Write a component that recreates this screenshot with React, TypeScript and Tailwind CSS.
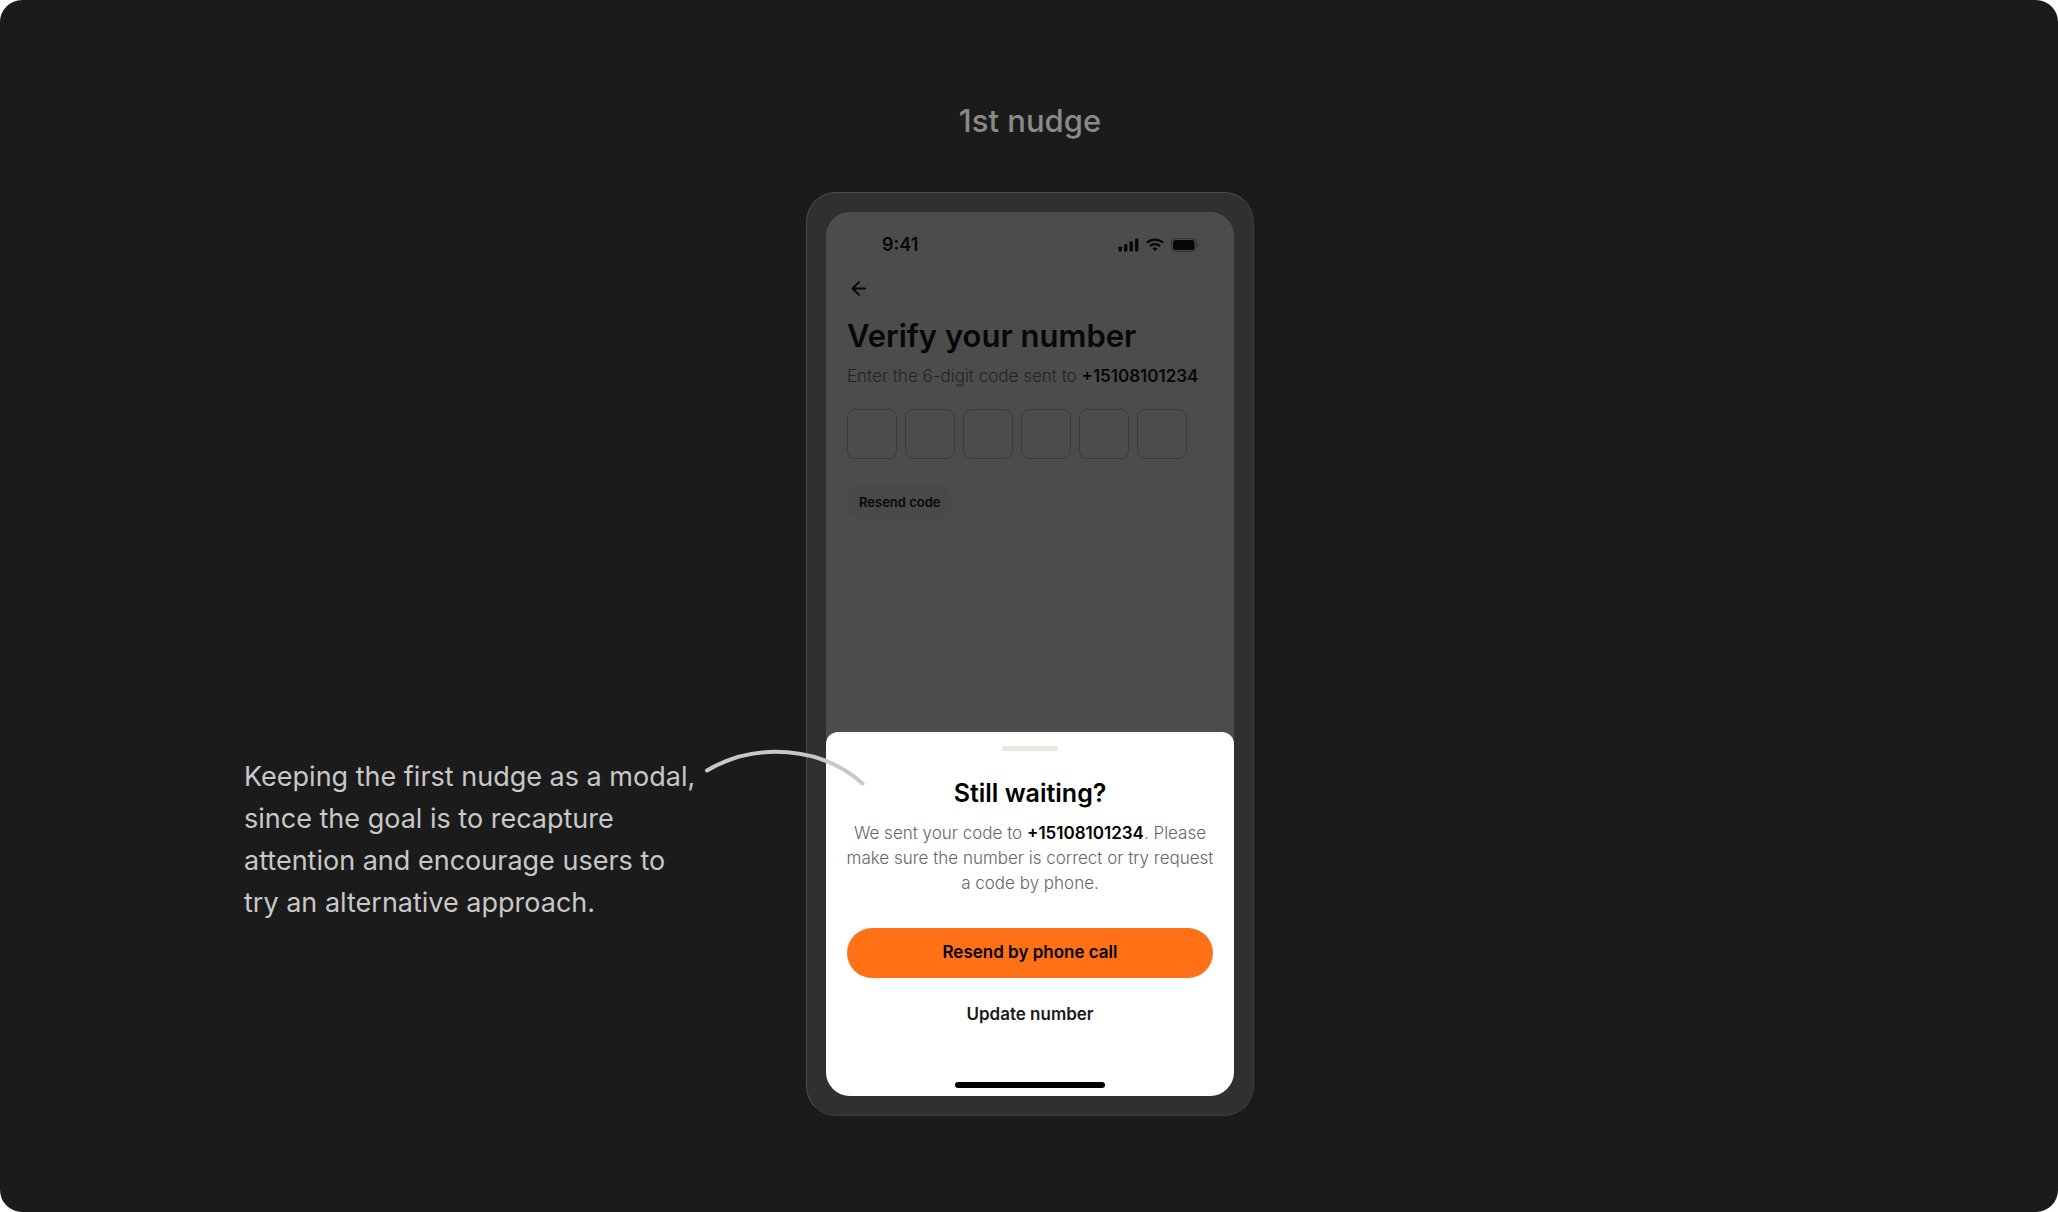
import React from 'react';

const PHONE_NUMBER = '+15108101234';
const CODE_LENGTH = 6;

const SignalIcon: React.FC = () => (
  <svg width="21" height="14" viewBox="0 0 21 14" fill="currentColor" aria-hidden="true">
    <rect x="0.5" y="8.5" width="3.4" height="5" rx="1" />
    <rect x="6" y="6" width="3.4" height="7.5" rx="1" />
    <rect x="11.5" y="3.2" width="3.4" height="10.3" rx="1" />
    <rect x="17" y="0.5" width="3.4" height="13" rx="1" />
  </svg>
);

const WifiIcon: React.FC = () => (
  <svg width="18" height="14" viewBox="0 0 18 14" fill="none" stroke="currentColor" aria-hidden="true">
    <path d="M1 4.7C5.4 0.6 12.6 0.6 17 4.7" strokeWidth="2.3" />
    <path d="M4 8.1C6.8 5.5 11.2 5.5 14 8.1" strokeWidth="2.2" />
    <path d="M9 13.2L6.2 10.4C7.8 9.1 10.2 9.1 11.8 10.4Z" fill="currentColor" stroke="none" />
  </svg>
);

const BatteryIcon: React.FC = () => (
  <svg width="28" height="14" viewBox="0 0 28 14" fill="none" aria-hidden="true">
    <rect x="0.5" y="0.5" width="24.5" height="13" rx="4" stroke="currentColor" strokeOpacity="0.4" />
    <rect x="2" y="2" width="21.5" height="10" rx="2.6" fill="currentColor" />
    <path d="M26.2 4.8V9.2C27.1 8.8 27.6 8 27.6 7C27.6 6 27.1 5.2 26.2 4.8Z" fill="currentColor" fillOpacity="0.4" />
  </svg>
);

const StatusBar: React.FC = () => (
  <div className="flex items-center justify-between pt-[21px] pr-[35px] pl-14 text-[#1a1a1a]">
    <span className="text-lg leading-6 font-semibold">9:41</span>
    <div className="flex items-center gap-[7px]">
      <SignalIcon />
      <WifiIcon />
      <BatteryIcon />
    </div>
  </div>
);

const VerifyScreen: React.FC = () => (
  <div className="h-full rounded-3xl bg-white text-[#1a1a1a]">
    <StatusBar />
    <div className="px-[21px] pt-5">
      <button type="button" aria-label="Back" className="flex h-6 w-6 items-center justify-center">
        <svg width="16" height="16" viewBox="0 0 16 16" fill="none" stroke="currentColor" strokeWidth="1.9" strokeLinecap="round" strokeLinejoin="round" aria-hidden="true">
          <path d="M14.2 7.500H2M8 1.100L1.600 7.500L8 13.900" />
        </svg>
      </button>
      <h2 className="mt-[15px] text-[31px] leading-10 font-semibold">Verify your number</h2>
      <p className="mt-2 text-[17px] leading-6 font-light whitespace-nowrap text-[#777]">
        Enter the 6-digit code sent to <strong className="font-semibold text-[#1a1a1a]">{PHONE_NUMBER}</strong>
      </p>
      <div className="mt-[21px] flex gap-2">
        {Array.from({ length: CODE_LENGTH }, (_, i) => (
          <input
            key={i}
            type="text"
            inputMode="numeric"
            maxLength={1}
            aria-label={`Digit ${i + 1}`}
            className="h-[50px] w-[50px] rounded-lg border border-[#c4c4c4] bg-white text-center"
          />
        ))}
      </div>
      <button type="button" className="mt-[26px] h-9 rounded-full bg-[#f4f4f4] px-3 text-[13px] font-semibold">
        Resend code
      </button>
    </div>
  </div>
);

const NudgeSheet: React.FC = () => (
  <section role="dialog" aria-labelledby="nudge-title" className="flex flex-col rounded-t-xl bg-white px-[21px] pb-2 text-center text-black">
    <div className="mt-[14px] h-[5px] w-14 self-center rounded-full bg-[#ebe4df]" />
    <h3 id="nudge-title" className="mt-6 text-[25px] leading-9 font-semibold">Still waiting?</h3>
    <p className="-mx-2 mt-[10px] text-[17px] leading-[25px] font-light text-[#666]">
      We sent your code to <strong className="font-semibold text-black">{PHONE_NUMBER}</strong>. Please
      <br />
      make sure the number is correct or try request
      <br />a code by phone.
    </p>
    <button type="button" className="mt-8 h-[50px] rounded-full bg-[#ff7017] text-[17px] font-semibold">
      Resend by phone call
    </button>
    <button type="button" className="mt-3 h-[50px] rounded-full text-[17px] font-semibold text-[#1a1a1a]">
      Update number
    </button>
    <div className="mt-[42px] h-[6px] w-[150px] self-center rounded-full bg-black" />
  </section>
);

const Phone: React.FC = () => (
  <div className="rounded-[30px] border border-[#3c3c3c] border-t-[#4b4b4b] border-l-[#4b4b4b] bg-[#303030] p-[19px]">
    <div className="relative aspect-[408/884] overflow-hidden rounded-3xl">
      <VerifyScreen />
      <div className="absolute inset-0 flex flex-col justify-end bg-black/70">
        <NudgeSheet />
      </div>
    </div>
  </div>
);

const Annotation: React.FC = () => (
  <aside className="relative mr-[110px] mb-[192px] w-[452px] self-end justify-self-end">
    <p className="text-[27px] leading-[42px] text-[#c8c8c8]">
      Keeping the first nudge as a modal, since the goal is to recapture attention and encourage users to try an alternative approach.
    </p>
    <svg className="absolute -top-[7px] left-full z-10 ml-1.5" width="166" height="40" viewBox="0 0 166 40" fill="none" aria-hidden="true">
      <path d="M5 21.5C53 -7 119 -3 160.5 34.5" stroke="#c8c8c8" strokeWidth="4" strokeLinecap="round" />
    </svg>
  </aside>
);

export default function App() {
  return (
    <div className="min-h-screen bg-white font-['Inter',sans-serif]">
      <main className="min-h-screen rounded-[22px] bg-[#1b1b1b] pt-24 pb-24 pl-0.5">
        <h1 className="text-center text-[31px] leading-[50px] font-medium text-[#8a8a8a]">1st nudge</h1>
        <div className="mt-[46px] grid grid-cols-[1fr_448px_1fr]">
          <Annotation />
          <Phone />
        </div>
      </main>
    </div>
  );
}
